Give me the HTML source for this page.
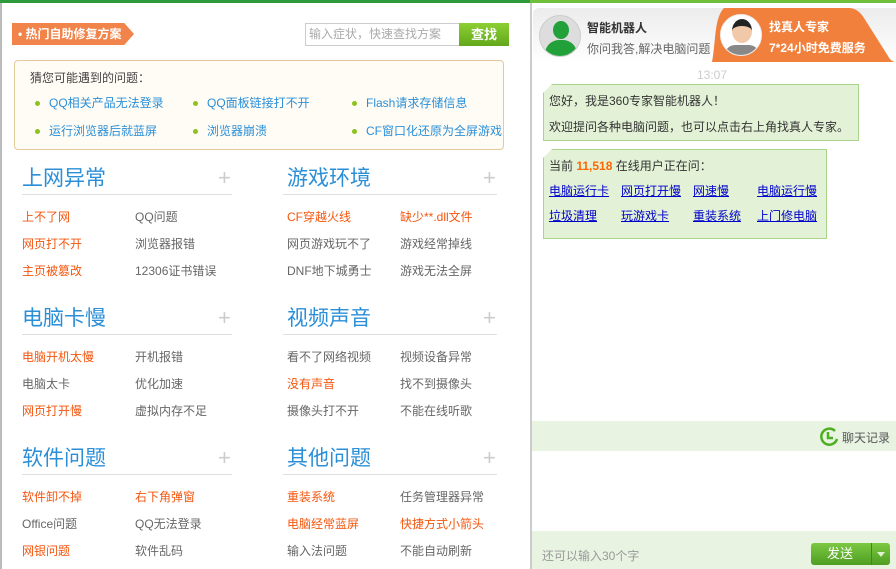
<!DOCTYPE html><html><head><meta charset="utf-8"><style>
*{margin:0;padding:0;box-sizing:border-box}
body{width:896px;height:569px;overflow:hidden;background:#fff;font-family:"Liberation Sans","Noto Sans CJK SC",sans-serif;font-size:12px;position:relative;color:#666}
.a{position:absolute;white-space:nowrap}
.h{font-size:21px;color:#2b8fd8}
.ln{position:absolute;height:1px;background:#dedede}
.pl{position:absolute;font-size:22px;color:#ccc;line-height:20px}
.o{color:#f4560e}
.b{color:#2b8fd8}
.dot{display:inline-block;width:5px;height:5px;border-radius:50%;background:#8dc21f;margin-right:9px;vertical-align:middle}
u{color:#00c;}
.bub{position:absolute;background:#e3f2d6;border:1px solid #a9d48c}
.tail{position:absolute;left:-1px;top:-1px;width:0;height:0;border-top:9px solid #fff;border-right:9px solid transparent}
</style></head><body>
<div class="a" style="left:0;top:0;width:530px;height:3px;background:#2e9b3a"></div>
<div class="a" style="left:530px;top:0;width:366px;height:3px;background:#6fbf3c"></div>
<div class="a" style="left:0;top:3px;width:2px;height:566px;background:#bbb"></div>
<div class="a" style="left:12px;top:23px;width:122px;height:22px;background:#f0844a;clip-path:polygon(0 0,92% 0,100% 50%,92% 100%,0 100%);color:#fff;font-size:12px;font-weight:bold;line-height:22px;padding-left:6px">•&nbsp;热门自助修复方案</div>
<div class="a" style="left:305px;top:23px;width:155px;height:23px;border:1px solid #ccc;color:#aaa;line-height:21px;padding-left:3px">输入症状，快速查找方案</div>
<div class="a" style="left:459px;top:23px;width:50px;height:23px;background:linear-gradient(#8ccf33,#62a81c);color:#fff;font-weight:bold;text-align:center;line-height:23px;font-size:13px">查找</div>
<div class="a" style="left:14px;top:60px;width:490px;height:90px;border:1px solid #e4c99a;border-radius:4px;background:#fffcf5"></div>
<div class="a" style="left:30px;top:69px;color:#444">猜您可能遇到的问题：</div>
<div class="a b" style="left:35px;top:94px"><span class="dot"></span>QQ相关产品无法登录</div>
<div class="a b" style="left:193px;top:94px"><span class="dot"></span>QQ面板链接打不开</div>
<div class="a b" style="left:352px;top:94px"><span class="dot"></span>Flash请求存储信息</div>
<div class="a b" style="left:35px;top:122px"><span class="dot"></span>运行浏览器后就蓝屏</div>
<div class="a b" style="left:193px;top:122px"><span class="dot"></span>浏览器崩溃</div>
<div class="a b" style="left:352px;top:122px"><span class="dot"></span>CF窗口化还原为全屏游戏</div>

<div class="a h" style="left:22px;top:162px">上网异常</div><div class="pl" style="left:218px;top:168px">+</div><div class="ln" style="left:22px;top:194px;width:210px"></div>
<div class="a h" style="left:287px;top:162px">游戏环境</div><div class="pl" style="left:483px;top:168px">+</div><div class="ln" style="left:283px;top:194px;width:214px"></div>
<div class="a o" style="left:22px;top:208px">上不了网</div><div class="a" style="left:135px;top:208px">QQ问题</div><div class="a o" style="left:287px;top:208px">CF穿越火线</div><div class="a o" style="left:400px;top:208px">缺少**.dll文件</div>
<div class="a o" style="left:22px;top:235px">网页打不开</div><div class="a" style="left:135px;top:235px">浏览器报错</div><div class="a" style="left:287px;top:235px">网页游戏玩不了</div><div class="a" style="left:400px;top:235px">游戏经常掉线</div>
<div class="a o" style="left:22px;top:262px">主页被篡改</div><div class="a" style="left:135px;top:262px">12306证书错误</div><div class="a" style="left:287px;top:262px">DNF地下城勇士</div><div class="a" style="left:400px;top:262px">游戏无法全屏</div>

<div class="a h" style="left:22px;top:302px">电脑卡慢</div><div class="pl" style="left:218px;top:308px">+</div><div class="ln" style="left:22px;top:334px;width:210px"></div>
<div class="a h" style="left:287px;top:302px">视频声音</div><div class="pl" style="left:483px;top:308px">+</div><div class="ln" style="left:283px;top:334px;width:214px"></div>
<div class="a o" style="left:22px;top:348px">电脑开机太慢</div><div class="a" style="left:135px;top:348px">开机报错</div><div class="a" style="left:287px;top:348px">看不了网络视频</div><div class="a" style="left:400px;top:348px">视频设备异常</div>
<div class="a" style="left:22px;top:375px">电脑太卡</div><div class="a" style="left:135px;top:375px">优化加速</div><div class="a o" style="left:287px;top:375px">没有声音</div><div class="a" style="left:400px;top:375px">找不到摄像头</div>
<div class="a o" style="left:22px;top:402px">网页打开慢</div><div class="a" style="left:135px;top:402px">虚拟内存不足</div><div class="a" style="left:287px;top:402px">摄像头打不开</div><div class="a" style="left:400px;top:402px">不能在线听歌</div>

<div class="a h" style="left:22px;top:442px">软件问题</div><div class="pl" style="left:218px;top:448px">+</div><div class="ln" style="left:22px;top:474px;width:210px"></div>
<div class="a h" style="left:287px;top:442px">其他问题</div><div class="pl" style="left:483px;top:448px">+</div><div class="ln" style="left:283px;top:474px;width:214px"></div>
<div class="a o" style="left:22px;top:488px">软件卸不掉</div><div class="a o" style="left:135px;top:488px">右下角弹窗</div><div class="a o" style="left:287px;top:488px">重装系统</div><div class="a" style="left:400px;top:488px">任务管理器异常</div>
<div class="a" style="left:22px;top:515px">Office问题</div><div class="a" style="left:135px;top:515px">QQ无法登录</div><div class="a o" style="left:287px;top:515px">电脑经常蓝屏</div><div class="a o" style="left:400px;top:515px">快捷方式小箭头</div>
<div class="a o" style="left:22px;top:542px">网银问题</div><div class="a" style="left:135px;top:542px">软件乱码</div><div class="a" style="left:287px;top:542px">输入法问题</div><div class="a" style="left:400px;top:542px">不能自动刷新</div>

<div class="a" style="left:530px;top:3px;width:366px;height:566px;background:#fff;border-left:2px solid #ccc"></div>
<div class="a" style="left:533px;top:8px;width:363px;height:56px;background:linear-gradient(#ececec,#fff);border-radius:6px 0 0 0"></div>
<div class="a" style="left:539px;top:15px;width:42px;height:42px;border-radius:50%;background:#ddd;border:1px solid #ccc;overflow:hidden"><div style="position:absolute;left:13px;top:5px;width:16px;height:18px;border-radius:50%;background:#22a03a"></div><div style="position:absolute;left:5px;top:24px;width:32px;height:22px;border-radius:14px 14px 0 0;background:#22a03a"></div></div>
<div class="a" style="left:587px;top:19px;color:#333;font-weight:bold;font-size:12px">智能机器人</div>
<div class="a" style="left:587px;top:40px;color:#666">你问我答,解决电脑问题</div>
<svg class="a" style="left:700px;top:8px" width="196" height="54"><path d="M24 0 H148 C156 0 160 4 164 10 L188 48 C190 52 193 54 196 54 H12 C16 34 14 10 24 0 Z" fill="#f0803c"/></svg>
<div class="a" style="left:720px;top:14px;width:42px;height:42px;border-radius:50%;background:#fff;overflow:hidden;border:1px solid #eee"><div style="position:absolute;left:11px;top:4px;width:20px;height:24px;border-radius:50%;background:#f1c9a8;border-top:7px solid #222"></div><div style="position:absolute;left:4px;top:30px;width:34px;height:14px;background:#888;border-radius:10px 10px 0 0"></div></div>
<div class="a" style="left:769px;top:18px;color:#fff;font-weight:bold;font-size:12px">找真人专家</div>
<div class="a" style="left:769px;top:39px;color:#fff;font-weight:bold;font-size:12px">7*24小时免费服务</div>
<div class="a" style="left:697px;top:68px;color:#ccc">13:07</div>
<div class="bub" style="left:543px;top:84px;width:316px;height:57px"><div class="tail"></div></div>
<div class="a" style="left:549px;top:92px;color:#333">您好，我是360专家智能机器人！</div>
<div class="a" style="left:549px;top:118px;color:#333">欢迎提问各种电脑问题，也可以点击右上角找真人专家。</div>
<div class="bub" style="left:543px;top:149px;width:284px;height:90px"><div class="tail"></div></div>
<div class="a" style="left:549px;top:157px;color:#333">当前 <b style="color:#f60">11,518</b> 在线用户正在问：</div>
<div class="a" style="left:549px;top:182px"><u>电脑运行卡</u></div><div class="a" style="left:621px;top:182px"><u>网页打开慢</u></div><div class="a" style="left:693px;top:182px"><u>网速慢</u></div><div class="a" style="left:757px;top:182px"><u>电脑运行慢</u></div>
<div class="a" style="left:549px;top:207px"><u>垃圾清理</u></div><div class="a" style="left:621px;top:207px"><u>玩游戏卡</u></div><div class="a" style="left:693px;top:207px"><u>重装系统</u></div><div class="a" style="left:757px;top:207px"><u>上门修电脑</u></div>
<div class="a" style="left:532px;top:421px;width:364px;height:30px;background:#e8f3e2"></div>
<svg class="a" style="left:819px;top:427px" width="20" height="20"><path d="M16 4 A8 8 0 1 0 18 12" fill="none" stroke="#4bb01f" stroke-width="2.5"/><path d="M9 5 V11 H14" fill="none" stroke="#4bb01f" stroke-width="2.5"/></svg>
<div class="a" style="left:842px;top:429px;color:#555">聊天记录</div>
<div class="a" style="left:532px;top:531px;width:364px;height:38px;background:#e8f3e2"></div>
<div class="a" style="left:542px;top:547px;color:#999">还可以输入30个字</div>
<div class="a" style="left:811px;top:543px;width:79px;height:22px;border-radius:3px;background:linear-gradient(#7cc843,#4f9e22);color:#fff;line-height:22px;font-size:13px"><span style="position:absolute;left:16px">发送</span><span style="position:absolute;left:60px;top:0;width:1px;height:22px;background:#3d8a18"></span><span style="position:absolute;left:66px;top:9px;border:4px solid transparent;border-top:5px solid #e0f0d0"></span></div>
</body></html>
